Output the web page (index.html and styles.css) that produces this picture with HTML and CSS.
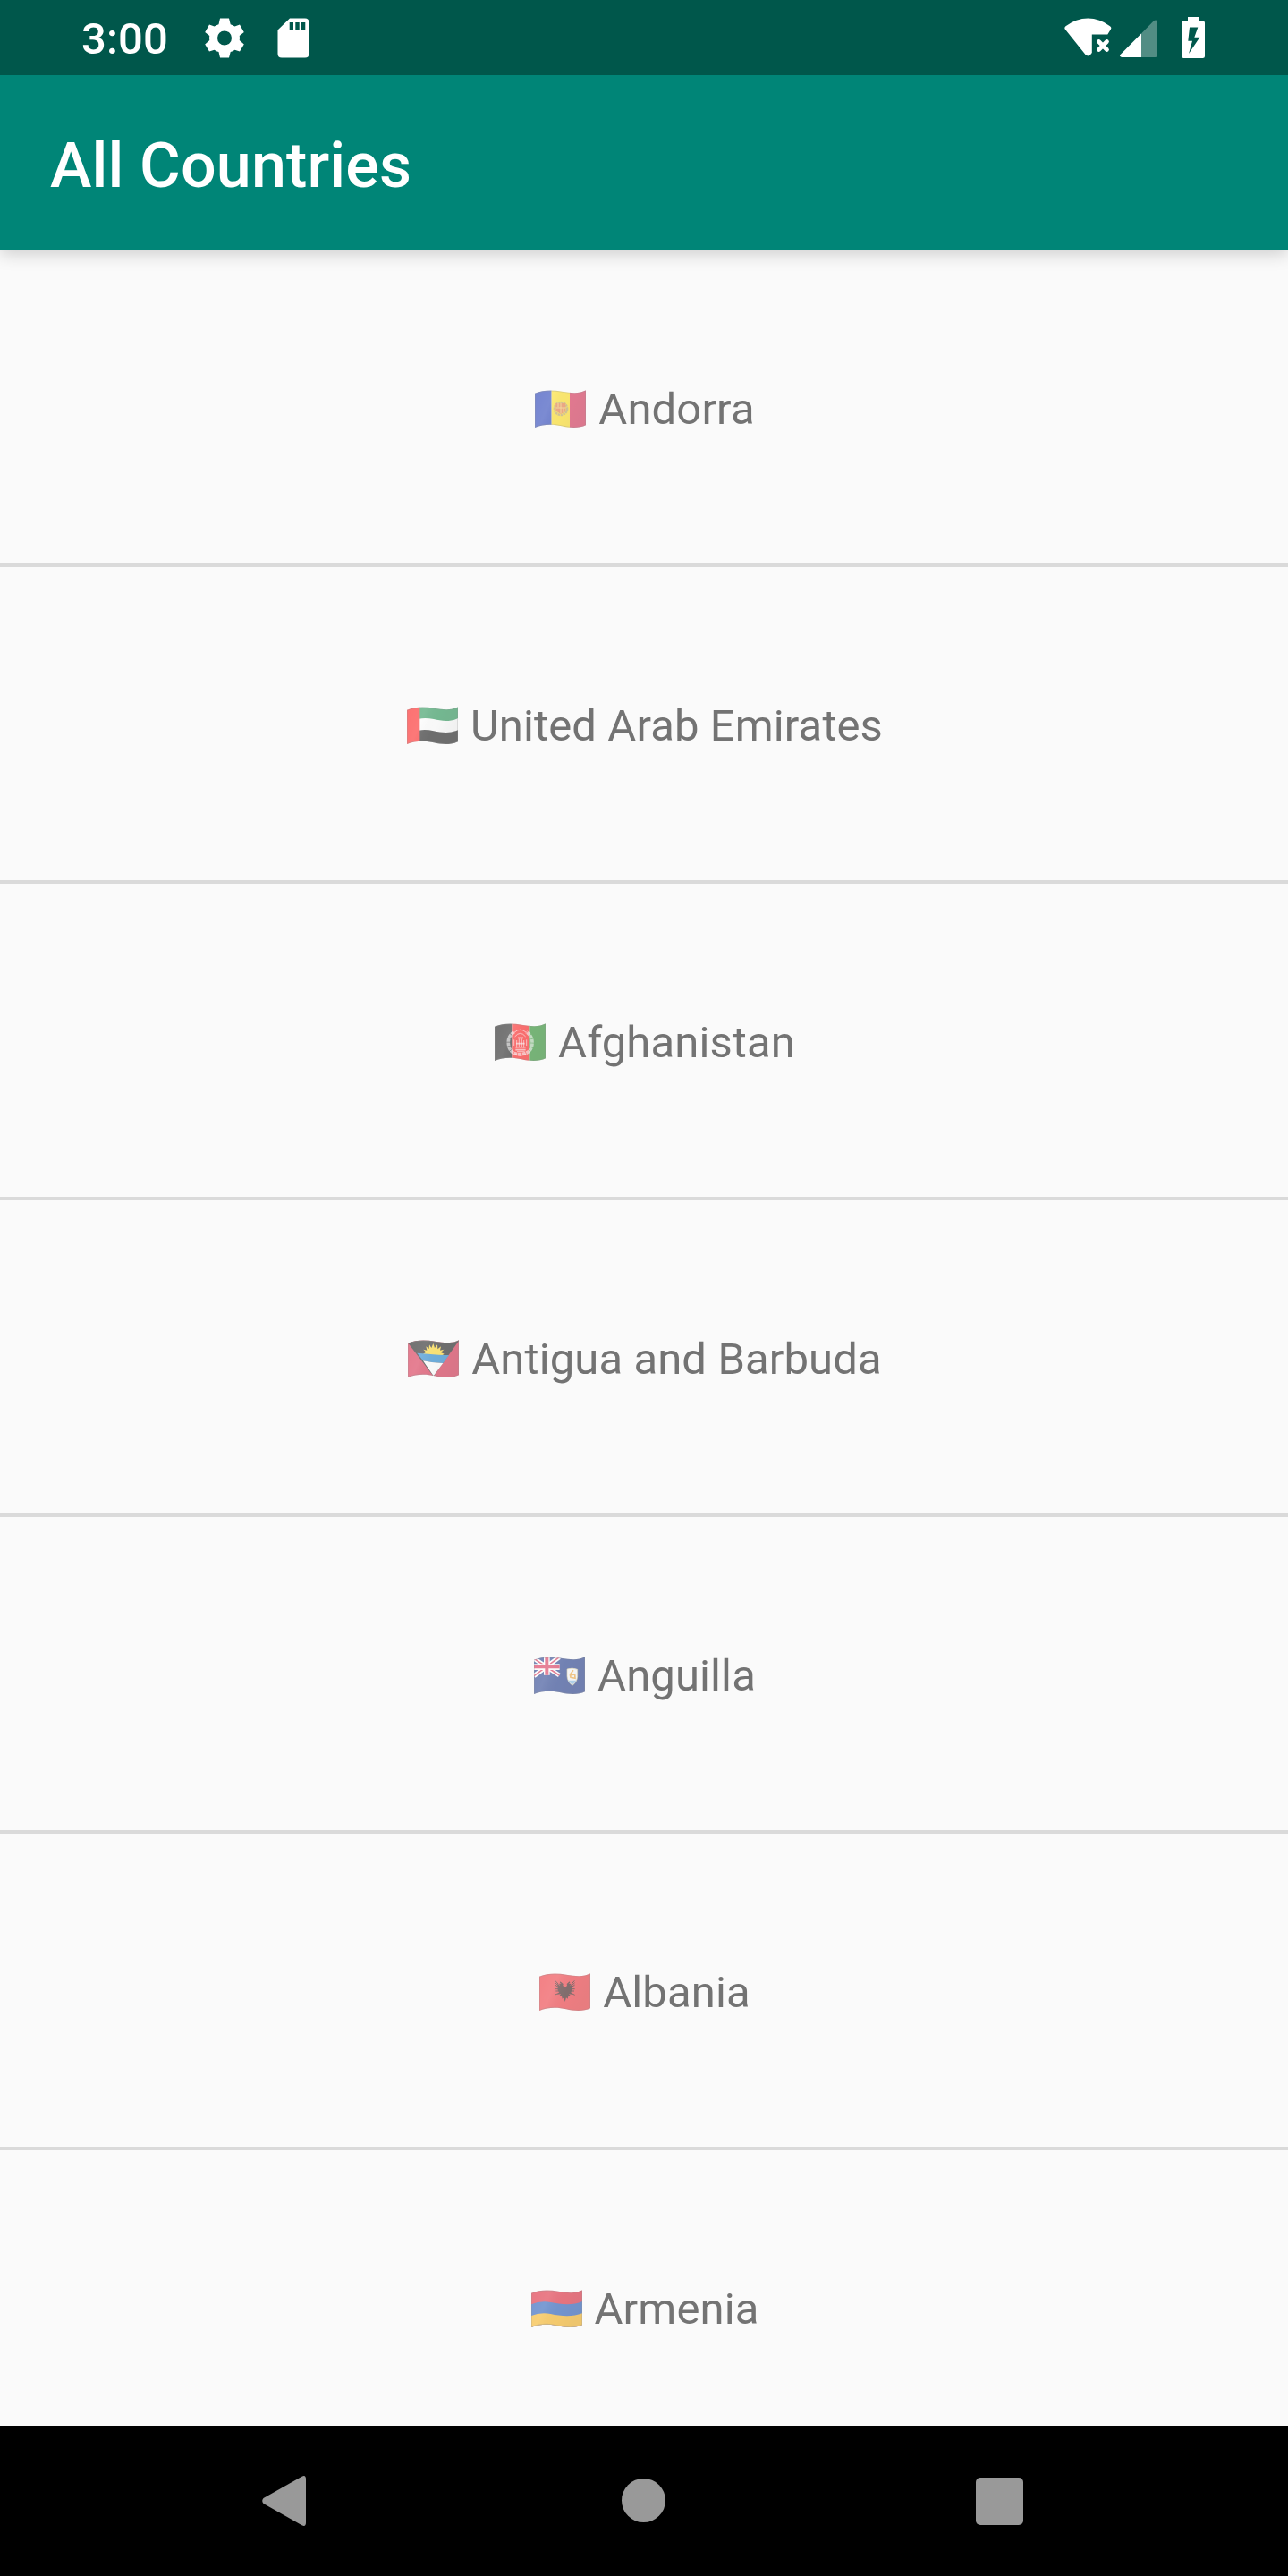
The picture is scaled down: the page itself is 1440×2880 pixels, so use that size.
FILE: index.html
```html
<!DOCTYPE html>
<html lang="en">
<head>
<meta charset="utf-8">
<title>All Countries</title>
<link rel="stylesheet" href="styles.css">
</head>
<body>
<svg class="defs" aria-hidden="true">
  <defs>
    <path id="cloth" d="M0 11C30 -1 60 0 90 5S150 13 171 1V118C150 129 115 127 90 121S30 113 0 126Z"/>
    <clipPath id="wave"><use href="#cloth"/></clipPath>
    <linearGradient id="fold" x1="0" x2="1" y1="0" y2=".3">
      <stop offset="0" stop-color="#fff" stop-opacity=".03"/>
      <stop offset=".35" stop-color="#fff" stop-opacity=".08"/>
      <stop offset=".65" stop-color="#000" stop-opacity=".03"/>
      <stop offset="1" stop-color="#000" stop-opacity=".08"/>
    </linearGradient>
    <g id="shade"><use href="#cloth" fill="url(#fold)"/><use href="#cloth" fill="none" stroke="#444" stroke-opacity=".3" stroke-width="5"/></g>
  </defs>
</svg>
<div class="screen">
  <header class="status">
    <div class="status-side">
      <span class="clock">3:00</span>
      <svg class="gear" viewBox="0 0 44 45"><path fill-rule="evenodd" d="M17 .5H27L28.7 7.2Q31 8 33.5 9.5L39 7.5L43.8 16L38.7 20Q39.2 22.5 38.7 25L43.8 29.5L39 37.5L33.5 35.7Q31 37.5 28.7 38L27 44.5H17L15.5 38Q13 37.5 10.6 35.7L5 37.5L.2 29.5L5.3 25Q4.8 22.5 5.3 20L.2 16L5 7.5L10.6 9.5Q13 8 15.5 7.2ZM22 14.5a8 8 0 1 0 0 16a8 8 0 1 0 0-16"/></svg>
      <svg class="sd" viewBox="0 0 36 45"><path fill-rule="evenodd" d="M14 .5H31Q35.5 .5 35.5 5V40Q35.5 44.5 31 44.5H5Q.5 44.5 .5 40V13.5ZM13.7 5V13.7H18V5ZM20.3 5V13.7H24.7V5ZM27 5V13.7H31.3V5Z"/></svg>
    </div>
    <div class="status-side">
      <svg class="wifi" viewBox="0 0 53 43"><path d="M.7 12.5Q-.3 10.7 1.5 9.2Q13 .5 26.3 .5T51 9.2Q53 10.7 52 12.5L48.3 18.5H30.8V39L29 41.3Q26.3 43.6 23.7 41.3Z"/><path d="M38.5 26.5L47.5 35.5M47.5 26.5L38.5 35.5" fill="none" stroke="#fff" stroke-width="4.7" stroke-linecap="round"/></svg>
      <svg class="cell" viewBox="0 0 42 42"><path opacity=".32" d="M24 15.5L38.2 1Q42 -.5 42 3V39.5Q42 42 39.5 42H24Z"/><path d="M24 15.5V42H2Q-1 41.2 .8 38.7Z"/></svg>
      <svg class="battery" viewBox="0 0 26 46"><path fill-rule="evenodd" d="M7 0H19V4.3H23.5Q26 4.3 26 6.8V43.5Q26 46 23.5 46H2.5Q0 46 0 43.5V6.8Q0 4.3 2.5 4.3H7ZM9 11.5L7.3 26.7H12L8 41L20.3 22.7H14.3L18.3 11.5Z"/></svg>
    </div>
  </header>
  <div class="appbar"><h1 class="title">All Countries</h1></div>
  <ul class="list">
    <li class="row">
      <svg class="flag" viewBox="0 0 171 126"><g clip-path="url(#wave)"><path fill="#0624ae" d="M0 0H56V126H0z"/><path fill="#ffda00" d="M56 0H117V126H56z"/><path fill="#d5143f" d="M117 0H171V126H117z"/><circle cx="87" cy="63" r="21" fill="none" stroke="#b59b4b" stroke-width="8" stroke-dasharray="7 2"/><path fill="#e66b28" d="M70 45H103V72L87 81L70 70z"/><path stroke="#f6c35a" stroke-width="3" d="M71 60H103M87 45V79M78 45V58M96 61V75"/><use href="#shade"/></g></svg>
      <span class="name">Andorra</span></li>
    <li class="row">
      <svg class="flag" viewBox="0 0 171 126"><g clip-path="url(#wave)"><path fill="#fff" d="M0 0H171V126H0z"/><path fill="#0b8740" d="M40 0H171V39C145 52 115 48 90 42Q62 37 40 41z"/><path fill="#000" d="M40 80Q62 75 90 82C120 88 145 90 171 79V126H40z"/><path fill="#ff0000" d="M0 0H43V126H0z"/><use href="#shade"/></g></svg>
      <span class="name">United Arab Emirates</span></li>
    <li class="row">
      <svg class="flag" viewBox="0 0 171 126"><g clip-path="url(#wave)"><path d="M0 0H58V126H0z"/><path fill="#ff0000" d="M58 0H115V126H58z"/><path fill="#128313" d="M115 0H171V126H115z"/><g fill="none" stroke="#fff" stroke-opacity=".6"><path stroke-width="11" stroke-dasharray="12 2" d="M65 29Q38 48 49 82Q58 105 86 104Q119 103 125 75Q131 46 106 29"/><path stroke-width="3" d="M66 31Q86 12 106 31M68 45Q86 23 104 45M65 75V55M107 75V55M70 81H104M75 95H101M74 82V57M98 82V57M82 80V52M91 80V52M68 104Q86 113 106 104"/><path stroke-width="5" d="M72 68H101M70 89H104M78 49H96"/></g><use href="#shade"/></g></svg>
      <span class="name">Afghanistan</span></li>
    <li class="row">
      <svg class="flag" viewBox="0 0 171 126"><g clip-path="url(#wave)"><path fill="#d21034" d="M0 0H171V126H0z"/><path d="M0 0H171V3L86 122L0 10z"/><path fill="#ffd20d" d="M51 47L61 41L52 32L64 35L61 22L71 30L72 16L79 27L85 12L90 27L99 16L100 31L111 22L108 35L121 32L111 42L122 47L112 53H58z"/><path fill="#0072c6" d="M31 44Q60 46 85 49T138 51L118 78Q85 78 51 70z"/><path fill="#fff" d="M51 70Q85 78 118 78L86 121z"/><use href="#shade"/></g></svg>
      <span class="name">Antigua and Barbuda</span></li>
    <li class="row">
      <svg class="flag" viewBox="0 0 171 126"><g clip-path="url(#wave)"><path fill="#07247f" d="M0 0H171V126H0z"/><path stroke="#fff" stroke-width="15" d="M0 7L85 63M0 65L85 2"/><path stroke="#d5143f" stroke-width="5" d="M0 7L85 63M0 65L85 2"/><path stroke="#fff" stroke-width="20" d="M43 0V62M0 35H86"/><path stroke="#d5143f" stroke-width="12" d="M43 0V62M0 34H86"/><path fill="#fff" stroke="#cabd80" stroke-width="2" d="M111 42Q128 36 146 43V68Q144 86 129 97Q112 86 111 66z"/><path fill="#7dbbe9" d="M114 80H142Q138 89 129 94Q120 89 114 80z"/><path fill="none" stroke="#f6a530" stroke-width="5" d="M122 59L132 46M121 60L123 70L138 73L137 60L124 62"/><use href="#shade"/></g></svg>
      <span class="name">Anguilla</span></li>
    <li class="row">
      <svg class="flag" viewBox="0 0 171 126"><g clip-path="url(#wave)"><path fill="#ed1c24" d="M0 0H171V126H0z"/><path fill="#240000" d="M80 36L70 28L69 33L74 36L66 35L69 43L61 35L62 58L66 64L60 71L72 70L66 77H75L77 86L82 82L86 96L90 82L95 86L97 77H106L99 70L110 71L106 64L110 58L111 35L103 43L106 35L98 36L103 32L101 28L92 36L93 42L86 48L79 42z"/><path fill="none" stroke="#240000" stroke-width="3" d="M53 25L64 37M53 32L64 42M53 39L64 47M53 46H64M53 53H64M55 60H66M53 72L66 67M118 25L108 37M119 32L108 42M119 39L108 47M119 46H108M119 53H108M117 60H106M119 73L106 67"/><use href="#shade"/></g></svg>
      <span class="name">Albania</span></li>
    <li class="row">
      <svg class="flag" viewBox="0 0 171 126"><g clip-path="url(#wave)"><path fill="#db0a20" d="M0 0H171V126H0z"/><path fill="#0745b0" d="M0 49Q30 36 65 42C100 49 140 53 171 39V126H0z"/><path fill="#f7a900" d="M0 87Q30 75 65 81C100 89 140 91 171 79V126H0z"/><use href="#shade"/></g></svg>
      <span class="name">Armenia</span></li>
  </ul>
  <nav class="nav">
    <svg class="back" viewBox="0 0 49 56"><path d="M44.5 .8Q49 -1.500 49 4V52Q49 57.500 44.500 55.200L1.500 31Q-1 28 1.500 25Z"/></svg>
    <svg class="home" viewBox="0 0 49 49"><circle cx="24.5" cy="24.5" r="24.5"/></svg>
    <svg class="recents" viewBox="0 0 53 53"><rect width="53" height="53" rx="5"/></svg>
  </nav>
</div>
</body>
</html>
```
FILE: styles.css
```css
* { box-sizing: border-box; }
body { margin: 0; background: #fafafa; font-family: Roboto, sans-serif; }
svg { display: block; flex: none; }
.defs { position: absolute; width: 0; height: 0; }
.screen { width: 1440px; height: 2880px; display: flex; flex-direction: column; overflow: hidden; }
.status { height: 84px; flex: none; background: #00574b; color: #fff; fill: #fff; display: flex; justify-content: space-between; padding: 0 93px 0 91px; z-index: 2; }
.status-side { display: flex; align-items: flex-start; }
.clock { font-size: 49px; font-weight: 500; line-height: 58px; margin-top: 15px; width: 138px; white-space: nowrap; letter-spacing: .15px; }
.gear { width: 44px; height: 45px; margin-top: 20px; }
.sd { width: 36px; height: 45px; margin: 20px 0 0 37px; }
.wifi { width: 53px; height: 43px; margin-top: 20px; }
.cell { width: 42px; height: 42px; margin: 22px 0 0 9px; }
.battery { width: 26px; height: 46px; margin: 19px 0 0 27px; }
.appbar { height: 196px; flex: none; background: #008577; color: #fff; display: flex; align-items: center; padding: 6px 56px 0; box-shadow: 0 4px 18px rgba(0, 0, 0, .18); z-index: 1; }
.title { margin: 0; font-size: 70px; font-weight: 500; line-height: 82px; letter-spacing: .15px; }
.list { flex: 1; min-height: 0; overflow: hidden; margin: 0; padding: 0; list-style: none; background: #fafafa; }
.row { height: 354px; border-bottom: 4px solid #dadada; display: flex; align-items: center; justify-content: center; gap: 14px; padding: 4px 0 0 2px; color: #737373; font-size: 49px; line-height: 58px; letter-spacing: .11px; }
.name { padding-top: 2px; }
.flag { width: 57px; height: 42px; opacity: .56; }
.nav { height: 168px; flex: none; background: #000; fill: #999; display: flex; align-items: center; padding-left: 293px; }
.back { width: 49px; height: 56px; }
.home { width: 49px; height: 49px; margin: 0 0 1px 353px; }
.recents { width: 53px; height: 53px; margin-left: 347px; }
```
